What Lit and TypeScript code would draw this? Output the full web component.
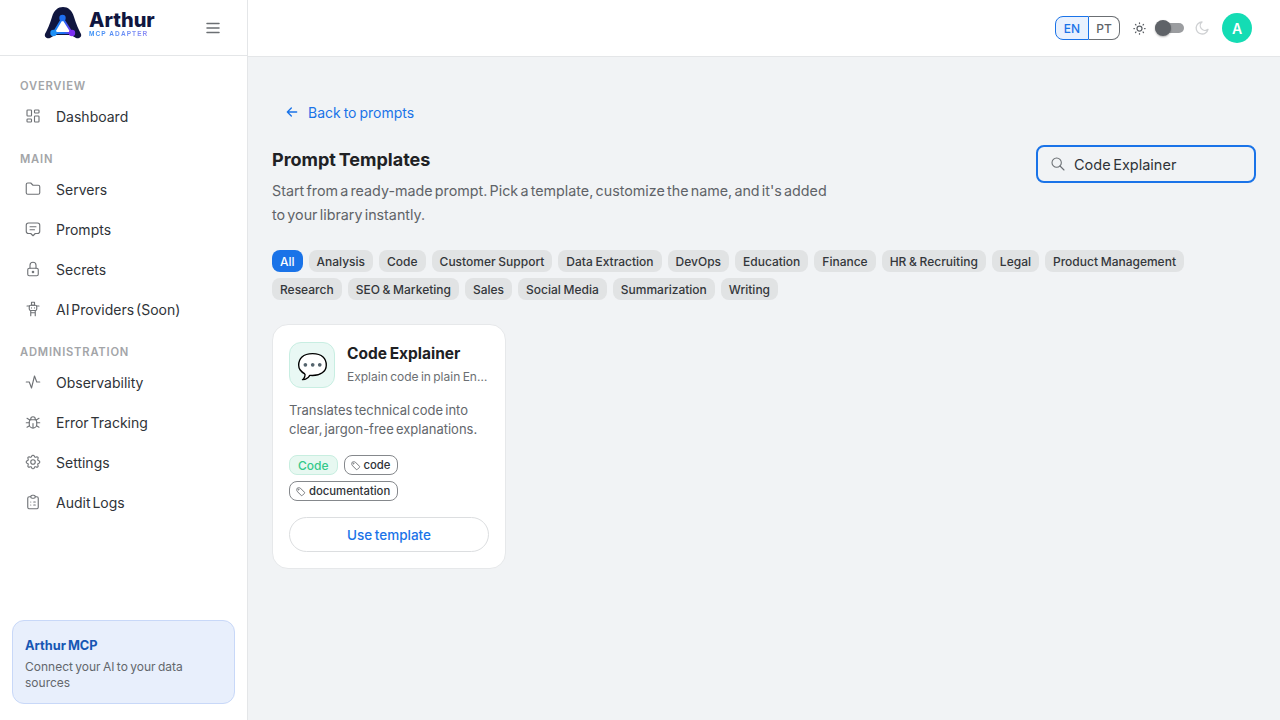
import { LitElement, html, css, svg } from 'lit';
import { customElement, state } from 'lit/decorators.js';

const navIcons: Record<string, unknown> = {
    dashboard: svg`<rect x="4" y="4" width="6" height="8" rx="1"/><rect x="14" y="4" width="6" height="4" rx="1"/><rect x="4" y="16" width="6" height="4" rx="1"/><rect x="14" y="12" width="6" height="8" rx="1"/>`,
    folder: svg`<path d="M5 4h4l3 3h7a2 2 0 0 1 2 2v8a2 2 0 0 1-2 2H5a2 2 0 0 1-2-2V6a2 2 0 0 1 2-2z"/>`,
    message: svg`<path d="M8 9h8M8 13h6"/><path d="M9 18H6a3 3 0 0 1-3-3V7a3 3 0 0 1 3-3h12a3 3 0 0 1 3 3v8a3 3 0 0 1-3 3h-3l-3 3z"/>`,
    lock: svg`<rect x="5" y="11" width="14" height="10" rx="2"/><circle cx="12" cy="16" r="1"/><path d="M8 11V7a4 4 0 0 1 8 0v4"/>`,
    robot: svg`<rect x="7" y="7" width="10" height="7" rx="2"/><path d="M10 3h4v4h-4zM4 8h3M17 8h3M9 14v7M15 14v7M9 17h6M10 10.500h.01M14 10.500h.01"/>`,
    activity: svg`<path d="M3 12h4l3 8 4-16 3 8h4"/>`,
    bug: svg`<path d="M9 9V8a3 3 0 0 1 6 0v1"/><path d="M8 9h8a6 6 0 0 1 1 3v3a5 5 0 0 1-10 0v-3a6 6 0 0 1 1-3"/><path d="M3 13h4M17 13h4M12 20v-6M4 19l3.350-2M20 19l-3.350-2M4 7l3.750 2.200M20 7l-3.750 2.200"/>`,
    settings: svg`<path d="M10.300 4.300c.4-1.800 3-1.800 3.400 0a1.700 1.700 0 0 0 2.600 1.100c1.500-1 3.300.8 2.300 2.300a1.700 1.700 0 0 0 1.100 2.600c1.800.4 1.800 3 0 3.400a1.700 1.700 0 0 0-1.100 2.600c1 1.500-.8 3.300-2.300 2.300a1.700 1.700 0 0 0-2.600 1.100c-.4 1.800-3 1.800-3.400 0a1.700 1.700 0 0 0-2.600-1.100c-1.500 1-3.300-.8-2.300-2.300a1.700 1.700 0 0 0-1.100-2.600c-1.800-.4-1.800-3 0-3.400a1.700 1.700 0 0 0 1.100-2.600c-1-1.500.8-3.300 2.300-2.300a1.700 1.700 0 0 0 2.600-1.100z"/><circle cx="12" cy="12" r="3"/>`,
    clipboard: svg`<path d="M9 5H7a2 2 0 0 0-2 2v12a2 2 0 0 0 2 2h10a2 2 0 0 0 2-2V7a2 2 0 0 0-2-2h-2"/><rect x="9" y="3" width="6" height="4" rx="2"/><path d="M9 12h.01M13 12h2M9 16h.01M13 16h2"/>`,
};

const navSections = [
    { label: 'OVERVIEW', items: [['dashboard', 'Dashboard']] },
    { label: 'MAIN', items: [['folder', 'Servers'], ['message', 'Prompts'], ['lock', 'Secrets'], ['robot', 'AI Providers (Soon)']] },
    { label: 'ADMINISTRATION', items: [['activity', 'Observability'], ['bug', 'Error Tracking'], ['settings', 'Settings'], ['clipboard', 'Audit Logs']] },
];

const categories = [
    'All', 'Analysis', 'Code', 'Customer Support', 'Data Extraction', 'DevOps', 'Education', 'Finance',
    'HR & Recruiting', 'Legal', 'Product Management', 'Research', 'SEO & Marketing', 'Sales', 'Social Media',
    'Summarization', 'Writing',
];

const tagIcon = html`<svg class="tag-icon" viewBox="0 0 24 24"><circle cx="8" cy="8" r="1"/><path d="M4 7v3.200a2 2 0 0 0 .6 1.400l8.800 8.800a2 2 0 0 0 2.800 0l4.200-4.200a2 2 0 0 0 0-2.800l-8.800-8.800a2 2 0 0 0-1.400-.6H7a3 3 0 0 0-3 3z"/></svg>`;

@customElement('app-root')
export class AppRoot extends LitElement {

    @state() search = 'Code Explainer';

    static styles = css`
        :host {
            background: #f1f3f5;
            color: #202124;
            display: flex;
            font-family: Inter, 'Liberation Sans', sans-serif;
            height: 720px;
            overflow: hidden;
            width: 1280px;
        }

        .sidebar {
            background: #fff;
            border-right: 1px solid #e4e6e8;
            box-sizing: border-box;
            display: flex;
            flex: none;
            flex-direction: column;
            height: 100%;
            width: 248px;
        }

        .brand {
            align-items: center;
            border-bottom: 1px solid #e4e6e8;
            box-sizing: border-box;
            display: flex;
            flex: none;
            height: 56px;
            padding: 0 25px 0 44px;
        }

        .logo-mark {
            flex: none;
            height: 34px;
            margin-top: -9px;
            width: 38px;
        }

        .logo-text {
            display: flex;
            flex-direction: column;
            margin: -7px 0 0 7px;
        }

        .logo-name {
            color: #10163f;
            font-size: 20px;
            font-weight: 800;
            line-height: 19px;
        }

        .logo-sub {
            background: linear-gradient(90deg, #2f8df5, #9a8cf5);
            -webkit-background-clip: text;
            background-clip: text;
            color: transparent;
            font-family: 'Liberation Sans', sans-serif;
            font-size: 6.500px;
            font-weight: 700;
            letter-spacing: 1.100px;
            line-height: 7px;
        }

        .burger {
            color: #6b6f73;
            height: 18px;
            margin-left: auto;
            width: 18px;
        }

        nav {
            display: flex;
            flex-direction: column;
            padding: 19px 12px 0;
        }

        .nav-label {
            color: #a3a5a8;
            font-size: 11.200px;
            font-weight: 600;
            letter-spacing: 0.8px;
            line-height: 19px;
            margin-top: 12px;
            padding: 2px 0 0 8px;
        }

        .nav-label:first-child {
            margin-top: 0;
        }

        .nav-item {
            align-items: center;
            color: #2f3338;
            display: flex;
            font-size: 14px;
            gap: 14px;
            height: 40px;
            padding-left: 12px;
            word-spacing: -2px;
        }

        .nav-item svg {
            color: #6f7276;
            fill: none;
            flex: none;
            height: 18px;
            stroke: currentColor;
            stroke-linecap: round;
            stroke-linejoin: round;
            stroke-width: 1.500;
            width: 18px;
        }

        .promo {
            background: #e8effc;
            border: 1px solid #c8d8f8;
            border-radius: 12px;
            box-sizing: border-box;
            height: 84px;
            margin: auto 12px 16px;
            padding: 16px 12px 0;
        }

        .promo-title {
            color: #1757b4;
            font-size: 12.800px;
            font-weight: 700;
            line-height: 17px;
            word-spacing: -1px;
        }

        .promo-text {
            color: #63676c;
            font-size: 12px;
            line-height: 16px;
            margin-top: 5px;
            word-spacing: -1px;
        }

        .page {
            display: flex;
            flex: 1;
            flex-direction: column;
            min-width: 0;
        }

        header {
            align-items: center;
            background: #fff;
            border-bottom: 1px solid #e4e6e8;
            box-sizing: border-box;
            display: flex;
            flex: none;
            height: 57px;
            justify-content: flex-end;
            padding: 0 28px 0 0;
        }

        .lang {
            display: flex;
            font-size: 12px;
            font-weight: 500;
            height: 24px;
        }

        .lang button {
            align-items: center;
            background: #fff;
            border: 1px solid #6b6f73;
            color: #5f6368;
            display: flex;
            font: inherit;
            justify-content: center;
            margin: 0;
            padding: 0;
        }

        .lang .en {
            background: #e9f1fe;
            border: 1px solid #1a73e8;
            border-radius: 8px 0 0 8px;
            color: #1a73e8;
            width: 34px;
        }

        .lang .pt {
            border-left: 0;
            border-radius: 0 8px 8px 0;
            width: 31px;
        }

        .sun {
            color: #5f6368;
            height: 15px;
            margin-left: 12px;
            width: 15px;
        }

        .toggle {
            align-items: center;
            background: #9b9da0;
            border-radius: 5px;
            display: flex;
            height: 10px;
            margin-left: 8px;
            width: 29px;
        }

        .knob {
            background: #5f6368;
            border-radius: 50%;
            box-shadow: 0 1px 2px rgba(0, 0, 0, 0.3);
            height: 16px;
            width: 16px;
        }

        .moon {
            color: #cfd1d3;
            height: 16px;
            margin-left: 10px;
            width: 16px;
        }

        .avatar {
            align-items: center;
            background: #14dcb4;
            border-radius: 50%;
            color: #fff;
            display: flex;
            font-size: 14px;
            font-weight: 600;
            height: 30px;
            justify-content: center;
            margin-left: 12px;
            width: 30px;
        }

        main {
            padding: 43px 24px 0;
        }

        .back {
            align-items: center;
            color: #1a73e8;
            display: flex;
            font-size: 14px;
            gap: 8px;
            height: 24px;
            padding-left: 12px;
            word-spacing: -1px;
        }

        .back svg {
            fill: none;
            height: 16px;
            stroke: currentColor;
            stroke-linecap: round;
            stroke-linejoin: round;
            stroke-width: 2;
            width: 16px;
        }

        .title-row {
            align-items: flex-start;
            display: flex;
            justify-content: space-between;
            margin-top: 21px;
        }

        h1 {
            color: #202124;
            font-size: 18px;
            font-weight: 700;
            line-height: 30px;
            margin: 0;
            word-spacing: -1.500px;
        }

        .subtitle {
            color: #5f6368;
            font-size: 14.300px;
            line-height: 24px;
            margin: 4px 0 0;
            width: 560px;
            word-spacing: -1.800px;
        }

        .search {
            align-items: center;
            border: 2px solid #1a73e8;
            border-radius: 8px;
            box-sizing: border-box;
            color: #2f3338;
            display: flex;
            font-size: 14.500px;
            gap: 8px;
            height: 38px;
            padding-left: 12px;
            width: 220px;
            word-spacing: -1.500px;
        }

        .search svg {
            color: #6b6f73;
            fill: none;
            flex: none;
            height: 16px;
            stroke: currentColor;
            stroke-linecap: round;
            stroke-width: 1.600;
            width: 16px;
        }

        .chips {
            display: flex;
            flex-wrap: wrap;
            gap: 6px;
            margin-top: 23px;
        }

        .chip {
            align-items: center;
            background: #e1e3e4;
            border-radius: 8px;
            color: #34373b;
            display: flex;
            font-size: 12px;
            font-weight: 500;
            height: 22px;
            padding: 0 8px;
            word-spacing: -0.5px;
        }

        .chip.active {
            background: #1a73e8;
            color: #fff;
        }

        .card {
            background: #fff;
            border: 1px solid #e6e8ea;
            border-radius: 16px;
            box-sizing: border-box;
            height: 245px;
            margin-top: 24px;
            padding: 17px 16px 0;
            width: 234px;
        }

        .card-head {
            display: flex;
            gap: 12px;
        }

        .card-icon {
            align-items: center;
            background: #e9f8f4;
            border: 1px solid #c8eee2;
            border-radius: 12px;
            box-sizing: border-box;
            display: flex;
            flex: none;
            font-family: 'DejaVu Sans', sans-serif;
            font-size: 25px;
            height: 46px;
            justify-content: center;
            padding-top: 2px;
            width: 46px;
        }

        .card-titles {
            min-width: 0;
        }

        .card-title {
            color: #202124;
            font-size: 15.500px;
            font-weight: 700;
            line-height: 24px;
            word-spacing: -1px;
        }

        .card-sub {
            color: #6b6f73;
            font-size: 12px;
            line-height: 18px;
            margin-top: 2px;
            overflow: hidden;
            text-overflow: ellipsis;
            white-space: nowrap;
            word-spacing: -1px;
        }

        .card-desc {
            color: #63676c;
            font-size: 13px;
            line-height: 19px;
            margin: 13px 0 0;
            word-spacing: -1.500px;
        }

        .tags {
            display: flex;
            flex-wrap: wrap;
            gap: 6px;
            margin-top: 16px;
        }

        .tag {
            align-items: center;
            background: #fff;
            border: 1px solid #85888c;
            border-radius: 8px;
            box-sizing: border-box;
            color: #2f3338;
            display: flex;
            font-size: 11.300px;
            font-weight: 500;
            gap: 3px;
            height: 20px;
            padding: 0 7px 0 5px;
        }

        .tag.cat {
            background: #e7f8f1;
            border-color: #c8eee0;
            color: #34c98a;
            font-size: 12px;
            padding: 0 8px;
        }

        .tag-icon {
            color: #6b6f73;
            fill: none;
            height: 11px;
            stroke: currentColor;
            stroke-width: 2;
            width: 11px;
        }

        .use {
            align-items: center;
            border: 1px solid #dcdee0;
            border-radius: 18px;
            box-sizing: border-box;
            color: #1a73e8;
            display: flex;
            font-size: 13.500px;
            font-weight: 500;
            height: 35px;
            justify-content: center;
            margin-top: 16px;
            word-spacing: -1px;
        }
    `;

    render() {
        return html`
            <aside class="sidebar">
                <div class="brand">
                    <svg class="logo-mark" viewBox="0 0 38 34">
                        <defs>
                            <linearGradient id="tri" x1="0" y1="0" x2="1" y2="0">
                                <stop offset="0" stop-color="#1f8af5"/>
                                <stop offset="0.55" stop-color="#1f6ff2"/>
                                <stop offset="1" stop-color="#7b2ff2"/>
                            </linearGradient>
                        </defs>
                        <path d="M1 28C3 24 6 18 8 11C10 4 14 1 19 1C24 1 28 4 30 11C32 18 35 24 37 28C38 31 35 33 32 32L27 29H11L6 32C3 33 0 31 1 28Z" fill="#10163f"/>
                        <path d="M18.500 12L9.500 27H28Z" fill="#fff" stroke="url(#tri)" stroke-width="2" stroke-linejoin="round"/>
                        <circle cx="18.500" cy="12" r="3.200" fill="#1f6ff2"/>
                        <circle cx="9.500" cy="27" r="3.200" fill="#1e90f5"/>
                        <circle cx="28" cy="27" r="3.200" fill="#7b2ff2"/>
                    </svg>
                    <div class="logo-text">
                        <span class="logo-name">Arthur</span>
                        <span class="logo-sub">MCP ADAPTER</span>
                    </div>
                    <svg class="burger" viewBox="0 0 18 18" fill="none" stroke="currentColor" stroke-width="1.500" stroke-linecap="round">
                        <path d="M3 4.500h12M3 9h12M3 13.500h12"/>
                    </svg>
                </div>
                <nav>
                    ${navSections.map((section) => html`
                        <div class="nav-label">${section.label}</div>
                        ${section.items.map(([icon, label]) => html`
                            <div class="nav-item">
                                <svg viewBox="0 0 24 24">${navIcons[icon]}</svg>
                                <span>${label}</span>
                            </div>
                        `)}
                    `)}
                </nav>
                <div class="promo">
                    <div class="promo-title">Arthur MCP</div>
                    <div class="promo-text">Connect your AI to your data sources</div>
                </div>
            </aside>
            <div class="page">
                <header>
                    <div class="lang">
                        <button class="en">EN</button>
                        <button class="pt">PT</button>
                    </div>
                    <svg class="sun" viewBox="0 0 24 24" fill="none" stroke="currentColor" stroke-width="2" stroke-linecap="round">
                        <circle cx="12" cy="12" r="4"/>
                        <path d="M3 12h1M20 12h1M12 3v1M12 20v1M5.600 5.600l.7.7M17.700 17.700l.7.7M5.600 18.400l.7-.7M17.700 6.300l.7-.7"/>
                    </svg>
                    <div class="toggle"><div class="knob"></div></div>
                    <svg class="moon" viewBox="0 0 24 24" fill="none" stroke="currentColor" stroke-width="2" stroke-linejoin="round">
                        <path d="M12 3a9 9 0 1 0 9 11A7 7 0 0 1 12 3z"/>
                    </svg>
                    <div class="avatar">A</div>
                </header>
                <main>
                    <div class="back">
                        <svg viewBox="0 0 24 24"><path d="M5 12h14M5 12l6 6M5 12l6-6"/></svg>
                        <span>Back to prompts</span>
                    </div>
                    <div class="title-row">
                        <div>
                            <h1>Prompt Templates</h1>
                            <p class="subtitle">Start from a ready-made prompt. Pick a template, customize the name, and it's added to your library instantly.</p>
                        </div>
                        <div class="search">
                            <svg viewBox="0 0 24 24"><circle cx="10" cy="10" r="7"/><path d="M21 21l-6-6"/></svg>
                            <span>${this.search}</span>
                        </div>
                    </div>
                    <div class="chips">
                        ${categories.map((name, i) => html`<span class="chip ${i === 0 ? 'active' : ''}">${name}</span>`)}
                    </div>
                    <div class="card">
                        <div class="card-head">
                            <div class="card-icon">💬</div>
                            <div class="card-titles">
                                <div class="card-title">Code Explainer</div>
                                <div class="card-sub">Explain code in plain English</div>
                            </div>
                        </div>
                        <p class="card-desc">Translates technical code into clear, jargon-free explanations.</p>
                        <div class="tags">
                            <span class="tag cat">Code</span>
                            <span class="tag">${tagIcon}code</span>
                            <span class="tag">${tagIcon}documentation</span>
                        </div>
                        <div class="use">Use template</div>
                    </div>
                </main>
            </div>
        `;
    }
}
